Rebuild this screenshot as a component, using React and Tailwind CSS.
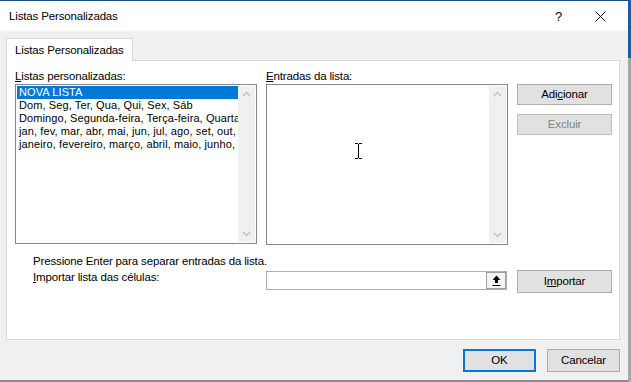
import React from "react";

const FONT = { fontFamily: '"Liberation Sans", Arial, sans-serif' };

function ChevronUp() {
  return (
    <svg width="17" height="17" viewBox="0 0 17 17">
      <path d="M5 10 L8.5 6.5 L12 10" fill="none" stroke="#c2c2c2" strokeWidth="1.4" />
    </svg>
  );
}

function ChevronDown() {
  return (
    <svg width="17" height="17" viewBox="0 0 17 17">
      <path d="M5 7 L8.5 10.5 L12 7" fill="none" stroke="#c2c2c2" strokeWidth="1.4" />
    </svg>
  );
}

function Scrollbar() {
  return (
    <div className="w-[17px] h-full bg-[#f0f0f0] flex flex-col justify-between">
      <ChevronUp />
      <ChevronDown />
    </div>
  );
}

function Btn({ children, disabled, primary, className = "" }) {
  return (
    <div
      className={`flex items-center justify-center text-[11.5px] tracking-[-0.15px] ${
        primary
          ? "border-2 border-[#0078d7] bg-[#e1e1e1] text-black"
          : disabled
          ? "border border-[#bfbfbf] bg-[#e1e1e1] text-[#838383]"
          : "border border-[#adadad] bg-[#e1e1e1] text-black"
      } ${className}`}
    >
      {children}
    </div>
  );
}

const LISTS = [
  "NOVA LISTA",
  "Dom, Seg, Ter, Qua, Qui, Sex, Sáb",
  "Domingo, Segunda-feira, Terça-feira, Quarta-feira, Quinta-feira, Sexta-feira, Sábado",
  "jan, fev, mar, abr, mai, jun, jul, ago, set, out, nov, dez",
  "janeiro, fevereiro, março, abril, maio, junho, julho, agosto, setembro, outubro, novembro, dezembro",
];

export default function App() {
  return (
    <div className="w-[631px] h-[382px] flex bg-[#8c8c8c] overflow-hidden" style={FONT}>
      {/* Dialog */}
      <div className="w-[628px] h-[380px] flex flex-col bg-[#f0f0f0] border-t border-[#1f4e79] text-black">
        {/* Title bar */}
        <div className="h-[30px] bg-white flex items-center text-[11.5px] tracking-[-0.15px]">
          <span className="ml-[9px] pt-[1px]">Listas Personalizadas</span>
          <span className="ml-auto mr-[33px] text-[13px] pt-[1px]">?</span>
          <svg width="11" height="11" viewBox="0 0 11 11" className="mr-[22px]">
            <path d="M0.5 0.5 L10.5 10.5 M10.5 0.5 L0.5 10.5" stroke="#111" strokeWidth="1" />
          </svg>
        </div>

        {/* Body */}
        <div className="flex flex-col pt-[7px] pl-[6px]">
          <div className="relative z-10 w-[127px] h-[23px] -mb-px bg-white border border-b-0 border-[#d9d9d9] flex items-center text-[11.5px] tracking-[-0.15px]">
            <span className="ml-[8px] pt-[1px]">Listas Personalizadas</span>
          </div>

          <div className="w-[614px] h-[280px] bg-white border border-[#d9d9d9] flex flex-col pl-[8px] pt-[8px] text-[11.5px] tracking-[-0.15px]">
            <div className="flex">
              {/* Left list */}
              <div className="w-[242px] flex flex-col">
                <div className="h-[15px] leading-[15px]">
                  <span className="underline">L</span>istas personalizadas:
                </div>
                <div className="h-[160px] border border-[#828790] bg-white flex p-[1px]">
                  <div className="flex-1 min-w-0 overflow-hidden text-[11px] tracking-[0.1px] leading-[13px]">
                    {LISTS.map((t, i) => (
                      <div
                        key={i}
                        className={`h-[13px] whitespace-nowrap pl-[2px] ${
                          i === 0 ? "bg-[#0078d7] text-white" : "text-black"
                        }`}
                      >
                        {t}
                      </div>
                    ))}
                  </div>
                  <Scrollbar />
                </div>
              </div>

              {/* Right list */}
              <div className="w-[242px] ml-[9px] flex flex-col">
                <div className="h-[15px] leading-[15px]">
                  <span className="underline">E</span>ntradas da lista:
                </div>
                <div className="relative h-[161px] border border-[#828790] bg-white flex justify-end p-[1px]">
                  <Scrollbar />
                  <svg width="9" height="16" viewBox="0 0 9 16" className="absolute left-[87px] top-[58px]">
                    <path d="M1 0.5 H4 M5 0.5 H8 M4.5 1 V15 M1 15.5 H4 M5 15.5 H8" stroke="#000" strokeWidth="1" fill="none" />
                  </svg>
                </div>
              </div>

              {/* Buttons */}
              <div className="ml-[9px] mt-[15px] flex flex-col gap-[9px]">
                <Btn className="w-[95px] h-[21px]">
                  <span>
                    Adi<span className="underline">c</span>ionar
                  </span>
                </Btn>
                <Btn disabled className="w-[95px] h-[21px]">
                  Excluir
                </Btn>
              </div>
            </div>

            <div className="mt-[9px] ml-[18px] h-[14px] leading-[14px]">
              Pressione Enter para separar entradas da lista.
            </div>

            <div className="mt-[2px] flex items-start">
              <div className="w-[251px] pl-[18px] h-[14px] leading-[14px]">
                <span className="underline">I</span>mportar lista das células:
              </div>
              <div className="mt-[1px] w-[241px] h-[19px] border border-[#adadad] bg-white flex justify-end">
                <div className="w-[20px] h-full border border-[#a0a0a0] bg-[#f4f4f4] flex items-center justify-center">
                  <svg width="9" height="11" viewBox="0 0 9 11">
                    <path d="M4.5 0.5 L8.5 5 H6 V8 H3 V5 H0.5 Z" fill="#000" />
                    <path d="M0.5 10.5 H8.5" stroke="#000" strokeWidth="1" />
                  </svg>
                </div>
              </div>
              <Btn className="ml-[10px] w-[95px] h-[23px]">
                <span>
                  I<span className="underline">m</span>portar
                </span>
              </Btn>
            </div>
          </div>

          {/* Dialog buttons */}
          <div className="mt-[9px] flex justify-end pr-[8px] gap-[11px]">
            <Btn primary className="w-[73px] h-[23px]">
              OK
            </Btn>
            <Btn className="w-[73px] h-[23px]">Cancelar</Btn>
          </div>
        </div>
      </div>

      {/* Backdrop at right edge */}
      <div className="flex-1 flex flex-col">
        <div className="h-[58px] bg-[#1c5b99]" />
        <div className="flex-1 bg-[#a6a6a6]" />
      </div>
    </div>
  );
}
